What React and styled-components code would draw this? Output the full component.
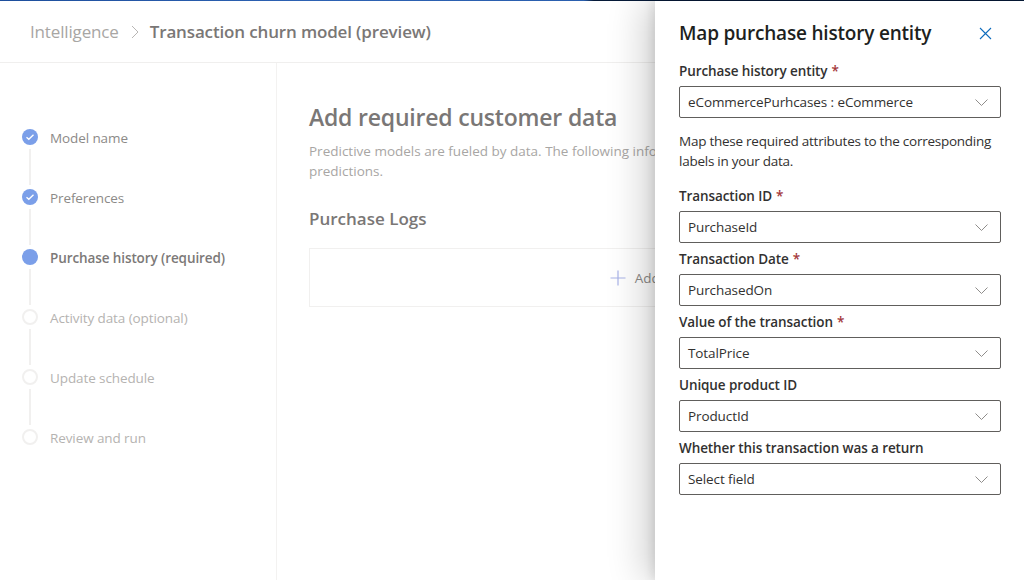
import React from "react";
import styled, { createGlobalStyle } from "styled-components";

const GlobalStyle = createGlobalStyle`
  html, body {
    margin: 0;
    padding: 0;
    height: 100%;
    overflow: hidden;
    background: #ffffff;
  }
  body {
    font-family: "Open Sans", "Noto Sans", "Liberation Sans", sans-serif;
    -webkit-font-smoothing: antialiased;
  }
  #root {
    height: 100%;
  }
`;

const Page = styled.div`
  position: relative;
  width: 1024px;
  height: 580px;
  display: flex;
  flex-direction: column;
  overflow: hidden;
`;

const TopStrip = styled.div`
  height: 1px;
  flex-shrink: 0;
  background: linear-gradient(
    90deg,
    #1d4e9c 0%,
    #2d62b3 30%,
    #2a5fae 57%,
    #061a38 58%,
    #061a38 100%
  );
`;

const Header = styled.header`
  height: 61px;
  flex-shrink: 0;
  display: flex;
  align-items: center;
  padding-left: 30px;
  border-bottom: 1px solid #f0efee;
  font-size: 17px;
`;

const Crumb = styled.span`
  color: ${(p) => (p.$current ? "#7a7776" : "#a8a6a4")};
  font-weight: ${(p) => (p.$current ? 600 : 400)};
  letter-spacing: -0.15px;
`;

const CrumbSep = styled.span`
  display: inline-flex;
  margin: 0 11px 0 12px;
  color: #b8b6b4;
`;

const Body = styled.div`
  flex: 1;
  display: flex;
  min-height: 0;
`;

const Sidebar = styled.nav`
  width: 277px;
  flex-shrink: 0;
  border-right: 1px solid #f3f2f1;
  padding: 66px 0 0 22px;
  box-sizing: border-box;
`;

const Step = styled.div`
  display: flex;
  align-items: flex-start;
  height: 60px;
`;

const Marker = styled.div`
  width: 16px;
  display: flex;
  flex-direction: column;
  align-items: center;
  flex-shrink: 0;
`;

const Dot = styled.div`
  width: 16px;
  height: 16px;
  box-sizing: border-box;
  border-radius: 50%;
  display: flex;
  align-items: center;
  justify-content: center;
  background: ${(p) => (p.$state === "todo" ? "#ffffff" : "#7b9fe9")};
  border: ${(p) => (p.$state === "todo" ? "2px solid #f1f0ef" : "none")};
`;

const Connector = styled.div`
  width: 2px;
  height: 36px;
  margin-top: 4px;
  background: #f1f0ef;
`;

const StepLabel = styled.span`
  margin-left: 12px;
  margin-top: 1px;
  font-size: 13.5px;
  line-height: 16px;
  letter-spacing: -0.1px;
  color: ${(p) =>
    p.$state === "current" ? "#7c7978" : p.$state === "done" ? "#8c8a88" : "#b5b3b1"};
  font-weight: ${(p) => (p.$state === "current" ? 600 : 400)};
`;

const Main = styled.main`
  flex: 1;
  padding: 38px 32px 0 32px;
  box-sizing: border-box;
  min-width: 0;
`;

const Title = styled.h1`
  margin: 0;
  font-size: 23px;
  line-height: 32px;
  font-weight: 600;
  color: #7a7776;
  letter-spacing: -0.2px;
`;

const Lead = styled.p`
  margin: 8px 0 0;
  font-size: 13.5px;
  line-height: 20px;
  color: #a8a6a4;
  max-width: 560px;
`;

const SectionTitle = styled.h2`
  margin: 26px 0 0;
  font-size: 17px;
  line-height: 24px;
  font-weight: 600;
  color: #7a7776;
`;

const EmptyBox = styled.div`
  margin-top: 17px;
  height: 59px;
  box-sizing: border-box;
  border: 1px solid #f1f0ef;
  display: flex;
  align-items: center;
  justify-content: center;
  gap: 9px;
  font-size: 13.5px;
  color: #8c8a88;
`;

const Panel = styled.aside`
  position: absolute;
  top: 1px;
  right: 0;
  bottom: 0;
  width: 369px;
  background: #ffffff;
  box-shadow: -10px 0 36px rgba(0, 0, 0, 0.2), -2px 0 10px rgba(0, 0, 0, 0.1);
  padding: 18px 23px 0 24px;
  box-sizing: border-box;
  color: #323130;
`;

const PanelHead = styled.div`
  display: flex;
  align-items: center;
  justify-content: space-between;
  height: 28px;
`;

const PanelTitle = styled.h2`
  margin: 0;
  font-size: 19px;
  line-height: 28px;
  font-weight: 600;
  color: #201f1e;
  letter-spacing: -0.2px;
`;

const CloseButton = styled.button`
  border: none;
  background: none;
  padding: 0;
  width: 16px;
  height: 16px;
  margin-right: 8px;
  display: flex;
  align-items: center;
  justify-content: center;
  cursor: pointer;
`;

const Field = styled.div`
  display: flex;
  flex-direction: column;
`;

const Label = styled.label`
  margin-top: ${(p) => (p.$first ? "14px" : "6px")};
  margin-bottom: 5px;
  font-size: 13.5px;
  line-height: 20px;
  font-weight: 600;
  color: #323130;
  letter-spacing: -0.1px;
`;

const Required = styled.span`
  color: #a4373a;
  margin-left: 4px;
`;

const Dropdown = styled.div`
  height: 32px;
  box-sizing: border-box;
  border: 1px solid #605e5c;
  border-radius: 2px;
  display: flex;
  align-items: center;
  justify-content: space-between;
  padding: 0 8px;
  font-size: 13.5px;
  color: #323130;
  letter-spacing: -0.1px;
`;

const Note = styled.p`
  margin: 13px 0 9px;
  font-size: 13.5px;
  line-height: 20px;
  color: #323130;
  letter-spacing: -0.25px;
`;

const Check = () => (
  <svg width="10" height="8" viewBox="0 0 10 8" fill="none">
    <path d="M1.5 4.2 L3.8 6.3 L8.5 1.7" stroke="#ffffff" strokeWidth="1.3" />
  </svg>
);

const Chevron = () => (
  <svg width="13" height="7" viewBox="0 0 13 7" fill="none" style={{ marginRight: 4 }}>
    <path d="M0.5 0.5 L6.5 6.5 L12.5 0.5" stroke="#8f8d8b" strokeWidth="1" />
  </svg>
);

const steps = [
  { label: "Model name", state: "done" },
  { label: "Preferences", state: "done" },
  { label: "Purchase history (required)", state: "current" },
  { label: "Activity data (optional)", state: "todo" },
  { label: "Update schedule", state: "todo" },
  { label: "Review and run", state: "todo" },
];

const fields = [
  { label: "Transaction ID", required: true, value: "PurchaseId" },
  { label: "Transaction Date", required: true, value: "PurchasedOn" },
  { label: "Value of the transaction", required: true, value: "TotalPrice" },
  { label: "Unique product ID", required: false, value: "ProductId" },
  { label: "Whether this transaction was a return", required: false, value: "Select field" },
];

const App = () => {
  return (
    <Page>
      <GlobalStyle />
      <TopStrip />
      <Header>
        <Crumb>Intelligence</Crumb>
        <CrumbSep>
          <svg width="8" height="14" viewBox="0 0 8 14" fill="none">
            <path d="M1 1 L7 7 L1 13" stroke="#b8b6b4" strokeWidth="1" />
          </svg>
        </CrumbSep>
        <Crumb $current>Transaction churn model (preview)</Crumb>
      </Header>
      <Body>
        <Sidebar>
          {steps.map((s, i) => (
            <Step key={s.label}>
              <Marker>
                <Dot $state={s.state}>{s.state === "done" && <Check />}</Dot>
                {i < steps.length - 1 && <Connector />}
              </Marker>
              <StepLabel $state={s.state}>{s.label}</StepLabel>
            </Step>
          ))}
        </Sidebar>
        <Main>
          <Title>Add required customer data</Title>
          <Lead>
            Predictive models are fueled by data. The following information is required to
            generate predictions.
          </Lead>
          <SectionTitle>Purchase Logs</SectionTitle>
          <EmptyBox>
            <svg width="16" height="16" viewBox="0 0 16 16" fill="none">
              <path d="M8 0.5 V15.5 M0.5 8 H15.5" stroke="#a9b3e8" strokeWidth="1.2" />
            </svg>
            Add data
          </EmptyBox>
        </Main>
      </Body>
      <Panel>
        <PanelHead>
          <PanelTitle>Map purchase history entity</PanelTitle>
          <CloseButton aria-label="Close">
            <svg width="13" height="13" viewBox="0 0 13 13" fill="none">
              <path d="M1 1 L12 12 M12 1 L1 12" stroke="#0f6cbd" strokeWidth="1.1" />
            </svg>
          </CloseButton>
        </PanelHead>
        <Field>
          <Label $first>
            Purchase history entity<Required>*</Required>
          </Label>
          <Dropdown>
            eCommercePurhcases : eCommerce
            <Chevron />
          </Dropdown>
        </Field>
        <Note>Map these required attributes to the corresponding labels in your data.</Note>
        {fields.map((f) => (
          <Field key={f.label}>
            <Label>
              {f.label}
              {f.required && <Required>*</Required>}
            </Label>
            <Dropdown>
              {f.value}
              <Chevron />
            </Dropdown>
          </Field>
        ))}
      </Panel>
    </Page>
  );
};

export default App;
